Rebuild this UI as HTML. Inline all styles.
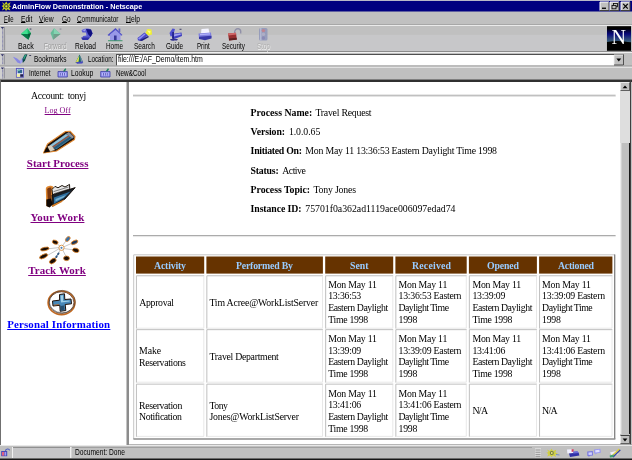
<!DOCTYPE html>
<html><head><meta charset="utf-8"><title>AdminFlow Demonstration - Netscape</title>
<style>
html,body{margin:0;padding:0;width:632px;height:460px;overflow:hidden;background:#c0c0c0}
*{box-sizing:border-box}
.abs,.abs>*{position:absolute}
.abs{left:0;top:0;width:632px;height:460px;overflow:hidden}
.x{white-space:nowrap}
.x u{text-underline-offset:0.3px;text-decoration-thickness:0.8px}
.cell{background:#fff;border:1px solid #e4e4e4;border-top-color:#b8b8b8;border-left-color:#b8b8b8}
.hd{background:#663300}
svg{overflow:visible}
</style></head><body>
<div class="abs" style="will-change:transform">
<!-- title bar -->
<div style="left:0;top:0;width:632px;height:11px;background:#000080"></div>
<!--TITLEICONS-->
<!-- menu -->
<div style="left:0;top:11px;width:632px;height:13px;background:#c0c0c0"></div>
<!-- toolbar -->
<div style="left:0;top:24px;width:632px;height:30px;background:#c0c0c0"></div>
<!--TOOLICONS-->
<!-- location -->
<div style="left:0;top:54px;width:632px;height:13px;background:#c0c0c0"></div>
<div style="left:116px;top:54px;width:508px;height:12px;background:#fff;border-top:1px solid #505050;border-left:1px solid #505050;border-bottom:1px solid #dcdcdc"></div>
<!-- personal -->
<div style="left:0;top:66px;width:632px;height:14px;background:#c0c0c0"></div>
<!--LOCICONS-->
<svg style="left:0;top:0" width="632" height="82" viewBox="0 0 632 82">
<!-- separators -->
<rect x="0" y="11" width="632" height="0.5" fill="#000080"/>
<rect x="0" y="24" width="632" height="0.8" fill="#969696"/><rect x="0" y="24.9" width="632" height="0.9" fill="#f4f4f4"/>
<rect x="0" y="51" width="632" height="1" fill="#8c8c8c"/><rect x="0" y="52" width="632" height="1" fill="#f0f0f0"/>
<rect x="0" y="65.6" width="632" height="0.9" fill="#8c8c8c"/><rect x="0" y="66.7" width="632" height="1" fill="#f0f0f0"/>
<rect x="6" y="34.8" width="600" height="16.2" fill="#c7c7c9"/>
<!-- top window edge -->
<rect x="0" y="0" width="632" height="1" fill="#b8b8c8"/>
<!-- title icon -->
<g>
<path d="M2 2 L4.5 4 L6.3 1.6 L7.6 4 L10.6 2.2 L9.3 5.2 L11 6.6 L9 7.6 L10.4 10.6 L7.4 9.2 L6 11 L4.8 8.8 L2 10.4 L3.4 7.4 L1.6 6 L3.6 5 Z" fill="#c8d020"/>
<circle cx="6.3" cy="6.3" r="2.3" fill="#506028"/>
<circle cx="6.3" cy="6.3" r="1.1" fill="#d8e040"/>
</g>
<!-- title buttons -->
<g>
<rect x="600" y="2" width="9" height="8.5" fill="#c0c0c0"/><path d="M600 10.5V2H609" stroke="#fff" stroke-width="1" fill="none"/><path d="M609 2V10.5H600" stroke="#404040" stroke-width="1" fill="none"/>
<rect x="602" y="7.6" width="4" height="1.3" fill="#000"/>
<rect x="610" y="2" width="9" height="8.5" fill="#c0c0c0"/><path d="M610 10.5V2H619" stroke="#fff" stroke-width="1" fill="none"/><path d="M619 2V10.5H610" stroke="#404040" stroke-width="1" fill="none"/>
<rect x="613.4" y="3.4" width="4" height="3.4" fill="none" stroke="#000" stroke-width="0.8"/><rect x="612" y="5.4" width="4" height="3.4" fill="#c0c0c0" stroke="#000" stroke-width="0.8"/>
<rect x="621" y="2" width="9" height="8.5" fill="#c0c0c0"/><path d="M621 10.5V2H630" stroke="#fff" stroke-width="1" fill="none"/><path d="M630 2V10.5H621" stroke="#404040" stroke-width="1" fill="none"/>
<path d="M623.2 3.8 L627.8 8.6 M627.8 3.8 L623.2 8.6" stroke="#000" stroke-width="1.2"/>
</g>
<!-- grips -->
<g>
<rect x="0.6" y="27" width="0.8" height="23" fill="#ececec"/><rect x="4.2" y="27" width="0.8" height="23" fill="#8c8c94"/>
<path d="M2.7 29.5 V50" stroke="#6868a8" stroke-width="0.9" stroke-dasharray="0.7 0.6" fill="none"/>
<path d="M0.7 27 L4.1 27 L2.4 29 Z" fill="#303068"/>
<rect x="0.6" y="54.2" width="0.8" height="10.299999999999997" fill="#ececec"/><rect x="4.2" y="54.2" width="0.8" height="10.299999999999997" fill="#8c8c94"/>
<path d="M2.7 56.7 V64.5" stroke="#6868a8" stroke-width="0.9" stroke-dasharray="0.7 0.6" fill="none"/>
<path d="M0.7 54.2 L4.1 54.2 L2.4 56.2 Z" fill="#303068"/>
<rect x="0.6" y="67.5" width="0.8" height="10.900000000000006" fill="#ececec"/><rect x="4.2" y="67.5" width="0.8" height="10.900000000000006" fill="#8c8c94"/>
<path d="M2.7 70.0 V78.4" stroke="#6868a8" stroke-width="0.9" stroke-dasharray="0.7 0.6" fill="none"/>
<path d="M0.7 67.5 L4.1 67.5 L2.4 69.5 Z" fill="#303068"/>
</g>
<!-- Back -->
<g>
<path d="M21 34 L27.5 28.3 L31 33 L28.5 39.8 Z" fill="#18b868"/>
<path d="M21 34 L27.5 28.3 L27.8 34 Z" fill="#40e090"/>
<path d="M21 34 L28.5 39.8 L27.8 34 Z" fill="#087848"/>
<path d="M27.8 34 L31 33 L28.5 39.8 Z" fill="#0a5a3a"/>
<rect x="29.6" y="28.6" width="1.8" height="0.9" fill="#303050"/>
</g>
<!-- Forward (disabled) -->
<g opacity="0.62">
<path d="M60.5 34 L54 28.3 L50.5 33 L53 39.8 Z" fill="#30b880"/>
<path d="M60.5 34 L54 28.3 L53.7 34 Z" fill="#60e0a8"/>
<path d="M60.5 34 L53 39.8 L53.7 34 Z" fill="#408868"/>
<rect x="59.6" y="28.6" width="1.8" height="0.9" fill="#505070"/>
</g>
<!-- Reload -->
<g>
<path d="M81.5 30.5 C83 28.5 88 27.5 91 29.5 L92.5 33 C92 36 90 38.5 86 39.5 L82 38.5 L83 36 L86.5 35.5 L86 32.5 L82.5 32.5 Z" fill="#5858d0"/>
<path d="M86 29 L91 29.5 L92.5 33.5 L90.5 37 L88 34 Z" fill="#101080"/>
<path d="M81 37.5 L90 37.5 L88 40 L82.5 40 Z" fill="#3030a8"/>
<path d="M82 30 L86 29 L85 31.5 Z" fill="#a0a0f0"/>
</g>
<!-- Home -->
<g>
<path d="M107.5 35 L115.5 28 L122.5 35 L121 35.8 L115.5 30.4 L109 36 Z" fill="#5050c8"/>
<path d="M110 34.5 L115.5 30 L120.5 34.5 L120.5 40.5 L110 40.5 Z" fill="#9898e8"/>
<rect x="114" y="35.5" width="2.6" height="5" fill="#383898"/>
<rect x="118.5" y="28.5" width="1.8" height="3.5" fill="#6060c0"/>
<rect x="108" y="40.3" width="14.5" height="0.9" fill="#309060"/>
</g>
<!-- Search -->
<g>
<path d="M145.5 33 L147.5 29 L151.5 29.5 L152 34.5 L148 35.5 Z" fill="#f0f030"/>
<path d="M147 30.5 L150.5 31 L150 34 Z" fill="#ffff90"/>
<path d="M137.5 38 L144.5 32.5 L148 35.5 L141 40.5 L138 40.5 Z" fill="#4848c8"/>
<path d="M138 38.5 L144.5 33.5 L145.5 34.5 L139.5 39.5 Z" fill="#9090f0"/>
<path d="M139 40.5 L148 36 L149 37 L142 41 Z" fill="#202080"/>
</g>
<!-- Guide -->
<g>
<path d="M169.5 33 L172.5 28.5 L175 29 L173 36 L170.5 36.5 Z" fill="#5050d0"/>
<path d="M172 34 L181.5 32.5 L182 36 L174.5 39 L172 38 Z" fill="#4040c0"/>
<path d="M173 34.5 L180.5 33.3 L180.8 34.8 L174 36.5 Z" fill="#a0a0f0"/>
<rect x="172.3" y="32" width="1.6" height="8.5" fill="#202088"/>
<rect x="179.5" y="28.8" width="2" height="0.9" fill="#303060"/>
<path d="M170 39 L178 39 L177 40.6 L171 40.6 Z" fill="#303090"/>
</g>
<!-- Print -->
<g>
<path d="M201.5 29 L208.5 28.5 L209.5 33 L201 33.5 Z" fill="#f4f4ff"/>
<path d="M198.5 33.5 L211 32.5 L211.5 37.5 L199 38.5 Z" fill="#8080e0"/>
<path d="M199 36.8 L211.5 35.8 L211.5 38.5 L205 40.3 L199 39 Z" fill="#3838a8"/>
<path d="M200 34 L210 33.2 L210 34.4 L200 35.2 Z" fill="#b0b0f8"/>
</g>
<!-- Security -->
<g>
<path d="M234.5 34 C234 30 236.5 28.3 238.5 28.8 C240.5 29.3 241 31.5 240.6 33.5" fill="none" stroke="#9090a8" stroke-width="1.4"/>
<path d="M228 33.5 L236 32.8 L236.8 39.5 L229 40.5 Z" fill="#983030"/>
<path d="M228 33.5 L236 32.8 L236.2 34.6 L228.3 35.4 Z" fill="#d06868"/>
<path d="M229 38.5 L236.7 37.8 L236.8 39.8 L229 40.6 Z" fill="#602020"/>
</g>
<!-- Stop (disabled) -->
<g opacity="0.75">
<rect x="259" y="28" width="8.5" height="12.5" rx="1.5" fill="#8890b8"/>
<rect x="260.2" y="28" width="1.2" height="12.5" fill="#b8c0e0"/>
<circle cx="263.4" cy="30.6" r="1.7" fill="#c07080"/>
<circle cx="263.4" cy="34.3" r="1.7" fill="#a8a8c8"/>
<circle cx="263.4" cy="38" r="1.7" fill="#7878b0"/>
</g>
<!-- N logo -->
<g>
<defs><linearGradient id="ng" x1="0" y1="0" x2="0" y2="1"><stop offset="0" stop-color="#000028"/><stop offset="0.35" stop-color="#08087a"/><stop offset="0.7" stop-color="#28407c"/><stop offset="1" stop-color="#406878"/></linearGradient></defs>
<rect x="607" y="26.2" width="24" height="24.6" fill="#000"/>
<rect x="607" y="29.5" width="24" height="13" fill="url(#ng)"/>
<path d="M607 42 Q619 39.6 631 42.4 L631 44 L607 44 Z" fill="#000"/>
<text x="618.7" y="43.6" font-family="'Liberation Serif',serif" font-size="20" fill="#fff" text-anchor="middle">N</text>
</g>
<!-- Bookmarks icon -->
<g>
<path d="M13 56.8 L17 58.6 L20 61 L22.5 57.2 L23.4 61 L20.6 63.8 L17.5 62.6 Z" fill="#a0a0f0"/>
<path d="M13 56.8 L17 58.6 L20 61 L20.4 63.6 L17.5 62.6 Z" fill="#8888e0"/>
<path d="M24.6 54.4 L27.4 54.2 L25 60.5 L22.8 63 L22.4 59 Z" fill="#104848"/>
<path d="M24.8 55 L26.4 55 L24 59.5 L23.2 59 Z" fill="#30a888"/>
<rect x="29.2" y="55" width="1.9" height="0.9" fill="#303050"/>
</g>
<!-- Location icon -->
<g>
<path d="M79.6 54.4 L83.2 62.4 L75.4 62.8 Z" fill="#106868"/>
<path d="M79.4 55.5 L78.4 62.6 L75.4 62.8 Z" fill="#e8e848"/>
<path d="M80.2 56 L83.2 62.4 L81 62.5 Z" fill="#8090a8"/>
<path d="M75.8 62 L83 61.6 L82.4 63.6 L77 63.8 Z" fill="#4848c0"/>
</g>
<!-- Internet icon -->
<g>
<rect x="16.4" y="68.4" width="7" height="8.8" fill="#e8e8ff" stroke="#5050b8" stroke-width="0.9"/>
<rect x="17.6" y="69.6" width="4.6" height="3.6" fill="#306890"/>
<rect x="17.6" y="69.6" width="2.2" height="1.4" fill="#70c0b0"/>
<rect x="16.8" y="74.2" width="3.4" height="2.6" fill="#f0f0a0"/>
<rect x="20.2" y="74.2" width="2.8" height="2.6" fill="#202050"/>
</g>
<!-- Lookup icon -->
<g>
<path d="M58 71.5 L67.3 71.5 L67.3 77 L58 77 Z" fill="#9898f0" stroke="#4040a8" stroke-width="0.8"/>
<path d="M63 71.3 L65.2 68.2 L66.3 69 L65 71.5 Z" fill="#208060"/>
<rect x="59.5" y="73" width="6.3" height="2.6" fill="#c0c0ff"/>
<rect x="60.3" y="73" width="0.8" height="2.6" fill="#5050b0"/><rect x="62.2" y="73" width="0.8" height="2.6" fill="#5050b0"/><rect x="64.1" y="73" width="0.8" height="2.6" fill="#5050b0"/>
</g>
<!-- New&Cool icon -->
<g transform="translate(42.7,0)">
<path d="M58 71.5 L67.3 71.5 L67.3 77 L58 77 Z" fill="#9898f0" stroke="#4040a8" stroke-width="0.8"/>
<path d="M63 71.3 L65.2 68.2 L66.3 69 L65 71.5 Z" fill="#208060"/>
<rect x="59.5" y="73" width="6.3" height="2.6" fill="#c0c0ff"/>
<rect x="60.3" y="73" width="0.8" height="2.6" fill="#5050b0"/><rect x="62.2" y="73" width="0.8" height="2.6" fill="#5050b0"/><rect x="64.1" y="73" width="0.8" height="2.6" fill="#5050b0"/>
</g>
<!-- location dropdown button -->
<g>
<rect x="614" y="55" width="9.5" height="10" fill="#c0c0c0"/>
<path d="M614 65 V55 H623.5" stroke="#f0f0f0" stroke-width="0.9" fill="none"/>
<path d="M623.5 55 V65 H614" stroke="#404040" stroke-width="0.9" fill="none"/>
<path d="M616.4 58.6 L621.2 58.6 L618.8 61.6 Z" fill="#000"/>
</g>
</svg>

<!-- content -->
<div style="left:0;top:79px;width:632px;height:1px;background:#808080"></div>
<div style="left:0;top:80px;width:632px;height:2px;background:#303030"></div>
<div style="left:0;top:82px;width:632px;height:363px;background:#fff"></div>
<div style="left:0;top:80px;width:1px;height:365px;background:#707070"></div>
<div style="left:126px;top:82px;width:1px;height:363px;background:#c4c4c4"></div>
<div style="left:127px;top:82px;width:2px;height:363px;background:#8c8c8c"></div>
<!-- scrollbar -->
<div style="left:620px;top:82px;width:12px;height:363px;background:#c0c0c0"></div>
<div style="left:620px;top:91px;width:10px;height:52px;background:#dedede"></div>
<div style="left:620px;top:143px;width:1px;height:291px;background:#ececec"></div>
<div style="left:621px;top:143px;width:1px;height:291px;background:#d2d2d2"></div>
<div style="left:630px;top:80px;width:1px;height:365px;background:#404040"></div>
<div style="left:629px;top:143px;width:1px;height:291px;background:#181818"></div>
<div style="left:620px;top:82px;width:10px;height:9px;background:#c0c0c0;border-right:1px solid #606060;border-bottom:1px solid #606060;border-left:1px solid #e8e8e8;border-top:1px solid #e8e8e8"></div>
<div style="left:620px;top:435px;width:10px;height:9px;background:#c0c0c0;border-right:1px solid #606060;border-bottom:1px solid #606060;border-left:1px solid #e8e8e8;border-top:1px solid #404040"></div>
<svg style="left:620px;top:82px" width="10" height="9"><path d="M2.6 6.2 L7.4 6.2 L5 3.4 Z" fill="#000"/></svg>
<svg style="left:620px;top:435px" width="10" height="9"><path d="M2.6 3.6 L7.4 3.6 L5 6.4 Z" fill="#000"/></svg>

<svg style="left:0;top:82px" width="127" height="363" viewBox="0 82 127 363">
<!-- pencil: 43..75.5 x 131..153.5 -->
<g>
<path d="M43.5 153 L47.5 144 L65.5 131.5 L70 131.2 L75 136.5 L74.5 139.5 L56.5 151 Z" fill="#201008" stroke="#e08830" stroke-width="1.1" stroke-linejoin="round"/>
<path d="M49.5 145.5 L66 133.8 L72.5 138 L56 149.5 Z" fill="#4088a8"/>
<path d="M50.5 145 L66 134.2 L68 135.4 L52 146.6 Z" fill="#90c0d8"/>
<path d="M53.5 147.8 L70 136.6 L71.5 137.8 L55.5 149 Z" fill="#285878"/>
<path d="M52 146.8 L68.5 135.4 L69.6 136.3 L53.2 147.6 Z" fill="#a05038"/>
<path d="M66 133.8 L69 132 L74 137 L72.5 138.5 Z" fill="#909098"/>
<path d="M47.5 146.5 L51 145 L55 150 L50 151.5 Z" fill="#d8d0c0"/>
<path d="M43.8 152.8 L46.3 147.4 L50 151.6 Z" fill="#100804"/>
</g>
<!-- folder: 45..75 x 184..207.5 -->
<g>
<path d="M45.8 189 C45.8 186.6 48 186 51 185.8 L53.2 186.6 L52.4 203 L49.5 207.2 L46.3 206 Z" fill="#e08830"/>
<path d="M47.2 189.5 C47.2 188 49 187.6 51.4 187.6 L50.8 202 L48 203.5 Z" fill="#7a3810"/>
<path d="M46.4 199.5 L51 198.6 L52.8 204.6 L49.6 207.4 L46.4 206 Z" fill="#100804"/>
<path d="M52 189.4 L55 186.4 L58 187.8 L62 185.5 L65 187 L69.5 184.4 L70 193 L53 198 Z" fill="#e8e8e8" stroke="#201810" stroke-width="1"/>
<path d="M53.5 191.6 L68.5 187 M53.5 193.8 L68.5 189.2 M53.5 196 L68.5 191.4" stroke="#606060" stroke-width="0.8"/>
<path d="M52 195 L75.2 187.6 L65 199 L52.4 206.2 Z" fill="#182028" stroke="#100804" stroke-width="0.9" stroke-linejoin="round"/>
<path d="M54 197.4 L70.5 191.6 L64 198 L54 203.8 Z" fill="#3070a0"/>
<path d="M55.5 199 L66 195 L63.5 197.6 L55.5 201.4 Z" fill="#78b0d0"/>
<path d="M51.8 205.2 L64 199.4 L62 202 L52.6 207 Z" fill="#d88028"/>
</g>
<!-- track work: 38.4..79 x 237..263.5 -->
<g>
<g stroke="#909090" stroke-width="0.5">
<path d="M60.5 247 L56 242.5 M61.5 247 L67 239.5 M63 247.2 L72.5 243 M63.5 248.5 L74.5 250 M62.5 249.5 L66 256.5 M60.5 249.5 L54.5 259.5 M59.5 248.5 L46.5 256 M59.5 247.5 L46.5 249"/>
</g>
<circle cx="61.5" cy="247.8" r="2.6" fill="#fff" stroke="#d89040" stroke-width="0.9"/>
<circle cx="61.5" cy="247.8" r="1.1" fill="#5080b0"/>
<g>
<ellipse cx="55.2" cy="242.2" rx="3" ry="1.9" fill="#180c04" stroke="#e08830" stroke-width="0.8" transform="rotate(20 55.2 242.2)"/>
<ellipse cx="67.8" cy="239" rx="2.9" ry="1.8" fill="#3870a8" stroke="#e08830" stroke-width="0.8" transform="rotate(-50 67.8 239)"/>
<ellipse cx="74.5" cy="242.3" rx="3.6" ry="1.8" fill="#203858" stroke="#e08830" stroke-width="0.8" transform="rotate(-25 74.5 242.3)"/>
<ellipse cx="75.8" cy="250.3" rx="3.3" ry="2.1" fill="#180c04" stroke="#e08830" stroke-width="0.8" transform="rotate(15 75.8 250.3)"/>
<ellipse cx="66.5" cy="258.3" rx="2.9" ry="2.3" fill="#180c04" stroke="#e08830" stroke-width="0.8"/>
<ellipse cx="52.8" cy="261" rx="3.7" ry="2.2" fill="#180c04" stroke="#e08830" stroke-width="0.8" transform="rotate(-35 52.8 261)"/>
<ellipse cx="43.6" cy="256.3" rx="4.4" ry="1.9" fill="#180c04" stroke="#e08830" stroke-width="0.8" transform="rotate(-25 43.6 256.3)"/>
<ellipse cx="44.8" cy="249" rx="4.4" ry="1.7" fill="#180c04" stroke="#e08830" stroke-width="0.8" transform="rotate(-12 44.8 249)"/>
<ellipse cx="58.3" cy="253.8" rx="1.5" ry="1" fill="#305880" transform="rotate(-55 58.3 253.8)"/>
<ellipse cx="56.5" cy="256.6" rx="1.5" ry="1" fill="#305880" transform="rotate(-55 56.5 256.6)"/>
</g>
</g>
<!-- personal info: circle 47..76 x 290..315.4 -->
<g>
<ellipse cx="61.5" cy="302.8" rx="13.4" ry="11.8" fill="#fff" stroke="#c06820" stroke-width="1.6"/>
<ellipse cx="61.5" cy="302.6" rx="12.4" ry="10.8" fill="none" stroke="#402010" stroke-width="0.7"/>
<ellipse cx="62.3" cy="301.6" rx="13" ry="11.2" fill="none" stroke="#303030" stroke-width="0.5"/>
<path d="M59.5 294.5 L64.5 293.8 L64.8 299.5 L71 299 L71.5 303.8 L65.2 304.5 L65.8 310.5 L60.2 311.3 L59.8 305.3 L53 306 L52.5 301 L59.6 300.2 Z" fill="#4888b8" stroke="#201008" stroke-width="1" stroke-linejoin="round"/>
<path d="M60.5 295.5 L63 295.2 L63.2 301 L69.5 300.4 L69.6 301.6 L61 302.5 Z" fill="#a0d0e8"/>
<path d="M60.5 306 L64 305.6 L64.5 309.8 L61 310.3 Z" fill="#285070"/>
<path d="M53.5 304.8 L59 304.2 L59 305 L54 305.6 Z" fill="#c06820"/>
</g>
</svg>


<!-- right frame -->

<!-- table -->
<svg style="left:0;top:90px" width="632" height="355" viewBox="0 90 632 355">
<rect x="133" y="235.1" width="482.6" height="1" fill="#a2a2a2"/><rect x="133" y="236.1" width="482.6" height="1" fill="#e6e6e6"/>
<rect x="133" y="94.3" width="482.6" height="0.9" fill="#dedede"/><rect x="133" y="95.2" width="482.6" height="1.1" fill="#b2b2b2"/><rect x="133" y="96.3" width="482.6" height="0.6" fill="#e0e0e0"/>
<path d="M133.7 439 V254.8 H615" fill="none" stroke="#c6c6c6" stroke-width="1"/>
<path d="M614.7 254.6 V439" fill="none" stroke="#808080" stroke-width="1.3"/>
<path d="M133.4 438.9 H615.35" fill="none" stroke="#8c8c8c" stroke-width="1.5"/>
<rect x="129" y="444.2" width="503" height="0.8" fill="#a4a4a4"/>
<rect x="136.0" y="256.5" width="68.2" height="17.1" fill="#663300"/>
<rect x="206.4" y="256.5" width="116.5" height="17.1" fill="#663300"/>
<rect x="325.2" y="256.5" width="68.0" height="17.1" fill="#663300"/>
<rect x="395.4" y="256.5" width="71.3" height="17.1" fill="#663300"/>
<rect x="468.9" y="256.5" width="68.0" height="17.1" fill="#663300"/>
<rect x="539.1" y="256.5" width="73.3" height="17.1" fill="#663300"/>
<path d="M136.45 328.6 V275.75 H204.2" fill="none" stroke="#b8b8b8" stroke-width="0.9"/><path d="M203.80 276.20 V328.20 H136.90" fill="none" stroke="#e2e2e2" stroke-width="0.8"/>
<path d="M206.85 328.6 V275.75 H322.9" fill="none" stroke="#b8b8b8" stroke-width="0.9"/><path d="M322.50 276.20 V328.20 H207.30" fill="none" stroke="#e2e2e2" stroke-width="0.8"/>
<path d="M325.65 328.6 V275.75 H393.2" fill="none" stroke="#b8b8b8" stroke-width="0.9"/><path d="M392.80 276.20 V328.20 H326.10" fill="none" stroke="#e2e2e2" stroke-width="0.8"/>
<path d="M395.85 328.6 V275.75 H466.7" fill="none" stroke="#b8b8b8" stroke-width="0.9"/><path d="M466.30 276.20 V328.20 H396.30" fill="none" stroke="#e2e2e2" stroke-width="0.8"/>
<path d="M469.35 328.6 V275.75 H536.9" fill="none" stroke="#b8b8b8" stroke-width="0.9"/><path d="M536.50 276.20 V328.20 H469.80" fill="none" stroke="#e2e2e2" stroke-width="0.8"/>
<path d="M539.55 328.6 V275.75 H612.4" fill="none" stroke="#b8b8b8" stroke-width="0.9"/><path d="M612.00 276.20 V328.20 H540.00" fill="none" stroke="#e2e2e2" stroke-width="0.8"/>
<path d="M136.45 382.6 V329.65 H204.2" fill="none" stroke="#b8b8b8" stroke-width="0.9"/><path d="M203.80 330.10 V382.20 H136.90" fill="none" stroke="#e2e2e2" stroke-width="0.8"/>
<path d="M206.85 382.6 V329.65 H322.9" fill="none" stroke="#b8b8b8" stroke-width="0.9"/><path d="M322.50 330.10 V382.20 H207.30" fill="none" stroke="#e2e2e2" stroke-width="0.8"/>
<path d="M325.65 382.6 V329.65 H393.2" fill="none" stroke="#b8b8b8" stroke-width="0.9"/><path d="M392.80 330.10 V382.20 H326.10" fill="none" stroke="#e2e2e2" stroke-width="0.8"/>
<path d="M395.85 382.6 V329.65 H466.7" fill="none" stroke="#b8b8b8" stroke-width="0.9"/><path d="M466.30 330.10 V382.20 H396.30" fill="none" stroke="#e2e2e2" stroke-width="0.8"/>
<path d="M469.35 382.6 V329.65 H536.9" fill="none" stroke="#b8b8b8" stroke-width="0.9"/><path d="M536.50 330.10 V382.20 H469.80" fill="none" stroke="#e2e2e2" stroke-width="0.8"/>
<path d="M539.55 382.6 V329.65 H612.4" fill="none" stroke="#b8b8b8" stroke-width="0.9"/><path d="M612.00 330.10 V382.20 H540.00" fill="none" stroke="#e2e2e2" stroke-width="0.8"/>
<path d="M136.45 436.8 V384.15 H204.2" fill="none" stroke="#b8b8b8" stroke-width="0.9"/><path d="M203.80 384.60 V436.40 H136.90" fill="none" stroke="#e2e2e2" stroke-width="0.8"/>
<path d="M206.85 436.8 V384.15 H322.9" fill="none" stroke="#b8b8b8" stroke-width="0.9"/><path d="M322.50 384.60 V436.40 H207.30" fill="none" stroke="#e2e2e2" stroke-width="0.8"/>
<path d="M325.65 436.8 V384.15 H393.2" fill="none" stroke="#b8b8b8" stroke-width="0.9"/><path d="M392.80 384.60 V436.40 H326.10" fill="none" stroke="#e2e2e2" stroke-width="0.8"/>
<path d="M395.85 436.8 V384.15 H466.7" fill="none" stroke="#b8b8b8" stroke-width="0.9"/><path d="M466.30 384.60 V436.40 H396.30" fill="none" stroke="#e2e2e2" stroke-width="0.8"/>
<path d="M469.35 436.8 V384.15 H536.9" fill="none" stroke="#b8b8b8" stroke-width="0.9"/><path d="M536.50 384.60 V436.40 H469.80" fill="none" stroke="#e2e2e2" stroke-width="0.8"/>
<path d="M539.55 436.8 V384.15 H612.4" fill="none" stroke="#b8b8b8" stroke-width="0.9"/><path d="M612.00 384.60 V436.40 H540.00" fill="none" stroke="#e2e2e2" stroke-width="0.8"/>
</svg>

<!-- status bar -->
<div style="left:0;top:445px;width:632px;height:15px;background:#c0c0c0"></div>
<div style="left:0;top:445px;width:632px;height:1px;background:#e8e8e8"></div>
<svg style="left:0;top:445px" width="632" height="15" viewBox="0 445 632 15">
<rect x="0" y="458.5" width="632" height="1.5" fill="#181818"/>
<!-- left security icon -->
<g>
<rect x="1.2" y="451" width="6" height="5.2" fill="#4848b8"/>
<rect x="2" y="452" width="2.2" height="3.6" fill="#e06080"/>
<rect x="4.6" y="452" width="1.6" height="3.6" fill="#a0a0f0"/>
<path d="M5.5 451 C5.5 448.6 9.2 448.2 9.6 450.4" fill="none" stroke="#5060c0" stroke-width="1.1"/>
</g>
<!-- panels -->
<rect x="12" y="447" width="1" height="11" fill="#f0f0f0"/>
<rect x="13" y="447" width="57" height="11" fill="#c6c6c8"/>
<rect x="13" y="447" width="57" height="1" fill="#909090"/>
<rect x="70" y="447" width="1.4" height="11" fill="#f0f0f0"/>
<rect x="72" y="447" width="460" height="1" fill="#a0a0a0"/>
<!-- component bar -->
<g>
<rect x="535" y="448" width="6" height="9.5" fill="#d8d8d8"/>
<path d="M535.5 450 H540.5 M535.5 452.3 H540.5 M535.5 454.6 H540.5 M535.5 456.6 H540.5" stroke="#808080" stroke-width="0.7"/>
<!-- navigator wheel -->
<path d="M547 449.6 L549.8 451 L551.6 448.8 L553 451 L556.4 449.8 L555.2 452.4 L558 453.4 L555.2 454.6 L556 457 L553 455.6 L551.6 457.2 L550 455.4 L547.2 456.6 L548.4 454 L546.4 452.8 L548.6 452 Z" fill="#d0d040"/>
<circle cx="551.8" cy="453" r="2" fill="#707848"/>
<circle cx="551.8" cy="453" r="0.9" fill="#f0f080"/>
<path d="M556 454.5 L559.5 455" stroke="#6080c0" stroke-width="0.8"/>
<!-- mailbox -->
<path d="M567 449.6 L573 449.2 L573.4 453 L567.4 453.4 Z" fill="#f0f0ff"/>
<rect x="571.6" y="449.2" width="2" height="2.6" fill="#d04060"/>
<path d="M569 453.4 L578.6 452.4 L579.4 455.4 L570 457 Z" fill="#3030a8"/>
<path d="M573 451.6 L577.5 451 L578.6 453 L573.4 453.6 Z" fill="#6868d8"/>
<!-- discussions -->
<path d="M587.2 451.6 L592.8 451 L593 455.6 L590 455.8 L588.6 457.2 L588.6 456 L587.4 456 Z" fill="#7878e0"/>
<path d="M588.4 452.6 L591.8 452.2 L592 454.8 L588.6 455 Z" fill="#d0d0ff"/>
<path d="M594 449.4 L600.4 448.8 L600.8 452.8 L597 453.2 L595.4 454.8 L595.6 453.4 L594.2 453.4 Z" fill="#9898f0"/>
<path d="M595.2 450.2 L599.4 449.8 L599.6 452 L595.4 452.4 Z" fill="#e0e0ff"/>
<!-- composer -->
<path d="M610 452.4 L616 451 L618.6 454 L612.4 456.4 Z" fill="#f0f0f8"/>
<path d="M612 456.6 L619.6 449.2 L620.8 450.2 L613.6 457.4 Z" fill="#3848a8"/>
<path d="M611.4 455.4 L618.8 448.6 L619.8 449.4 L612.4 456.4 Z" fill="#e0d040"/>
<path d="M609.6 455.6 L614 454.6 L613.4 457 L610 457.4 Z" fill="#40a070"/>
</g>
</svg>

<div class="abs" style="will-change:transform">
<div class="x" style="left:12.2px;top:2.8px;font-family:'Liberation Sans',sans-serif;font-size:7.4px;line-height:8.9px;transform:scaleX(0.976);transform-origin:0 50%;color:#fff;font-weight:bold;">AdminFlow Demonstration - Netscape</div>
<div class="x" style="left:3.5px;top:14.6px;font-family:'Liberation Sans',sans-serif;font-size:8.2px;line-height:9.8px;transform:scaleX(0.734);transform-origin:0 50%;color:#000;"><u>F</u>ile</div>
<div class="x" style="left:20.8px;top:14.6px;font-family:'Liberation Sans',sans-serif;font-size:8.2px;line-height:9.8px;transform:scaleX(0.807);transform-origin:0 50%;color:#000;"><u>E</u>dit</div>
<div class="x" style="left:39.2px;top:14.6px;font-family:'Liberation Sans',sans-serif;font-size:8.2px;line-height:9.8px;transform:scaleX(0.823);transform-origin:0 50%;color:#000;"><u>V</u>iew</div>
<div class="x" style="left:61.5px;top:14.6px;font-family:'Liberation Sans',sans-serif;font-size:8.2px;line-height:9.8px;transform:scaleX(0.786);transform-origin:0 50%;color:#000;"><u>G</u>o</div>
<div class="x" style="left:77.2px;top:14.6px;font-family:'Liberation Sans',sans-serif;font-size:8.2px;line-height:9.8px;transform:scaleX(0.776);transform-origin:0 50%;color:#000;"><u>C</u>ommunicator</div>
<div class="x" style="left:125.8px;top:14.6px;font-family:'Liberation Sans',sans-serif;font-size:8.2px;line-height:9.8px;transform:scaleX(0.824);transform-origin:0 50%;color:#000;"><u>H</u>elp</div>
<div class="x" style="left:17.7px;top:41.9px;font-family:'Liberation Sans',sans-serif;font-size:8.2px;line-height:9.8px;transform:scaleX(0.862);transform-origin:0 50%;color:#000;">Back</div>
<div class="x" style="left:44.3px;top:41.9px;font-family:'Liberation Sans',sans-serif;font-size:8.2px;line-height:9.8px;transform:scaleX(0.756);transform-origin:0 50%;color:#9c9c9c;text-shadow:0.6px 0.6px 0 #f4f4f4;">Forward</div>
<div class="x" style="left:74.7px;top:41.9px;font-family:'Liberation Sans',sans-serif;font-size:8.2px;line-height:9.8px;transform:scaleX(0.809);transform-origin:0 50%;color:#000;">Reload</div>
<div class="x" style="left:106.3px;top:41.9px;font-family:'Liberation Sans',sans-serif;font-size:8.2px;line-height:9.8px;transform:scaleX(0.778);transform-origin:0 50%;color:#000;">Home</div>
<div class="x" style="left:134.2px;top:41.9px;font-family:'Liberation Sans',sans-serif;font-size:8.2px;line-height:9.8px;transform:scaleX(0.801);transform-origin:0 50%;color:#000;">Search</div>
<div class="x" style="left:165.6px;top:41.9px;font-family:'Liberation Sans',sans-serif;font-size:8.2px;line-height:9.8px;transform:scaleX(0.787);transform-origin:0 50%;color:#000;">Guide</div>
<div class="x" style="left:197.2px;top:41.9px;font-family:'Liberation Sans',sans-serif;font-size:8.2px;line-height:9.8px;transform:scaleX(0.754);transform-origin:0 50%;color:#000;">Print</div>
<div class="x" style="left:222.0px;top:41.9px;font-family:'Liberation Sans',sans-serif;font-size:8.2px;line-height:9.8px;transform:scaleX(0.771);transform-origin:0 50%;color:#000;">Security</div>
<div class="x" style="left:257.0px;top:41.9px;font-family:'Liberation Sans',sans-serif;font-size:8.2px;line-height:9.8px;transform:scaleX(0.772);transform-origin:0 50%;color:#b0b0b0;text-shadow:0.6px 0.6px 0 #f4f4f4;">Stop</div>
<div class="x" style="left:34.2px;top:55.1px;font-family:'Liberation Sans',sans-serif;font-size:8.2px;line-height:9.8px;transform:scaleX(0.791);transform-origin:0 50%;color:#000;">Bookmarks</div>
<div class="x" style="left:87.8px;top:55.1px;font-family:'Liberation Sans',sans-serif;font-size:8.2px;line-height:9.8px;transform:scaleX(0.764);transform-origin:0 50%;color:#000;">Location:</div>
<div class="x" style="left:117.7px;top:55.1px;font-family:'Liberation Sans',sans-serif;font-size:8.2px;line-height:9.8px;transform:scaleX(0.847);transform-origin:0 50%;color:#000;">file:///E:/AF_Demo/item.htm</div>
<div class="x" style="left:28.6px;top:69.4px;font-family:'Liberation Sans',sans-serif;font-size:8.2px;line-height:9.8px;transform:scaleX(0.774);transform-origin:0 50%;color:#000;">Internet</div>
<div class="x" style="left:70.9px;top:69.4px;font-family:'Liberation Sans',sans-serif;font-size:8.2px;line-height:9.8px;transform:scaleX(0.830);transform-origin:0 50%;color:#000;">Lookup</div>
<div class="x" style="left:116.0px;top:69.4px;font-family:'Liberation Sans',sans-serif;font-size:8.2px;line-height:9.8px;transform:scaleX(0.775);transform-origin:0 50%;color:#000;">New&amp;Cool</div>
<div class="x" style="left:74.7px;top:448.1px;font-family:'Liberation Sans',sans-serif;font-size:8.2px;line-height:9.8px;transform:scaleX(0.812);transform-origin:0 50%;color:#000;">Document: Done</div>
<div class="x" style="left:31.1px;top:89.8px;font-family:'Liberation Serif',serif;font-size:9.8px;line-height:11.8px;letter-spacing:-0.401px;color:#000;word-spacing:1.8px;">Account: tonyj</div>
<div class="x" style="left:44.6px;top:106.4px;font-family:'Liberation Serif',serif;font-size:8px;line-height:9.6px;letter-spacing:0.023px;color:#800080;text-decoration:underline;text-decoration-thickness:0.6px;">Log Off</div>
<div class="x" style="left:26.8px;top:157.1px;font-family:'Liberation Serif',serif;font-size:10.9px;line-height:13.1px;letter-spacing:0.033px;color:#800080;font-weight:bold;text-decoration:underline;">Start Process</div>
<div class="x" style="left:30.5px;top:211.0px;font-family:'Liberation Serif',serif;font-size:10.9px;line-height:13.1px;letter-spacing:0.218px;color:#800080;font-weight:bold;text-decoration:underline;">Your Work</div>
<div class="x" style="left:28.2px;top:264.3px;font-family:'Liberation Serif',serif;font-size:10.9px;line-height:13.1px;letter-spacing:0.091px;color:#800080;font-weight:bold;text-decoration:underline;">Track Work</div>
<div class="x" style="left:7.2px;top:318.2px;font-family:'Liberation Serif',serif;font-size:10.9px;line-height:13.1px;letter-spacing:0.150px;color:#0000ff;font-weight:bold;text-decoration:underline;">Personal Information</div>
<div class="x" style="left:250.6px;top:106.6px;font-family:'Liberation Serif',serif;font-size:9.8px;line-height:11.8px;letter-spacing:0.002px;color:#000;font-weight:bold;">Process Name:</div>
<div class="x" style="left:315.4px;top:106.6px;font-family:'Liberation Serif',serif;font-size:9.8px;line-height:11.8px;letter-spacing:-0.233px;color:#000;">Travel Request</div>
<div class="x" style="left:250.6px;top:125.9px;font-family:'Liberation Serif',serif;font-size:9.8px;line-height:11.8px;letter-spacing:-0.076px;color:#000;font-weight:bold;">Version:</div>
<div class="x" style="left:288.9px;top:125.9px;font-family:'Liberation Serif',serif;font-size:9.8px;line-height:11.8px;letter-spacing:-0.063px;color:#000;">1.0.0.65</div>
<div class="x" style="left:250.6px;top:145.2px;font-family:'Liberation Serif',serif;font-size:9.8px;line-height:11.8px;letter-spacing:-0.277px;color:#000;font-weight:bold;">Initiated On:</div>
<div class="x" style="left:305.3px;top:145.2px;font-family:'Liberation Serif',serif;font-size:9.8px;line-height:11.8px;letter-spacing:-0.213px;color:#000;">Mon May 11 13:36:53 Eastern Daylight Time 1998</div>
<div class="x" style="left:250.6px;top:164.5px;font-family:'Liberation Serif',serif;font-size:9.8px;line-height:11.8px;letter-spacing:-0.218px;color:#000;font-weight:bold;">Status:</div>
<div class="x" style="left:282.3px;top:164.5px;font-family:'Liberation Serif',serif;font-size:9.8px;line-height:11.8px;letter-spacing:-0.525px;color:#000;">Active</div>
<div class="x" style="left:250.6px;top:183.8px;font-family:'Liberation Serif',serif;font-size:9.8px;line-height:11.8px;letter-spacing:-0.036px;color:#000;font-weight:bold;">Process Topic:</div>
<div class="x" style="left:313.4px;top:183.8px;font-family:'Liberation Serif',serif;font-size:9.8px;line-height:11.8px;letter-spacing:-0.180px;color:#000;">Tony Jones</div>
<div class="x" style="left:250.6px;top:203.1px;font-family:'Liberation Serif',serif;font-size:9.8px;line-height:11.8px;letter-spacing:-0.099px;color:#000;font-weight:bold;">Instance ID:</div>
<div class="x" style="left:305.3px;top:203.1px;font-family:'Liberation Serif',serif;font-size:9.8px;line-height:11.8px;letter-spacing:-0.011px;color:#000;">75701f0a362ad1119ace006097edad74</div>
<div class="x" style="left:154.0px;top:260.4px;font-family:'Liberation Serif',serif;font-size:9.8px;line-height:11.8px;letter-spacing:-0.172px;color:#99ccff;font-weight:bold;">Activity</div>
<div class="x" style="left:236.0px;top:260.4px;font-family:'Liberation Serif',serif;font-size:9.8px;line-height:11.8px;letter-spacing:-0.194px;color:#99ccff;font-weight:bold;">Performed By</div>
<div class="x" style="left:350.0px;top:260.4px;font-family:'Liberation Serif',serif;font-size:9.8px;line-height:11.8px;letter-spacing:-0.005px;color:#99ccff;font-weight:bold;">Sent</div>
<div class="x" style="left:412.0px;top:260.4px;font-family:'Liberation Serif',serif;font-size:9.8px;line-height:11.8px;letter-spacing:0.208px;color:#99ccff;font-weight:bold;">Received</div>
<div class="x" style="left:487.0px;top:260.4px;font-family:'Liberation Serif',serif;font-size:9.8px;line-height:11.8px;letter-spacing:-0.134px;color:#99ccff;font-weight:bold;">Opened</div>
<div class="x" style="left:558.0px;top:260.4px;font-family:'Liberation Serif',serif;font-size:9.8px;line-height:11.8px;letter-spacing:-0.223px;color:#99ccff;font-weight:bold;">Actioned</div>
<div class="x" style="left:328.2px;top:278.7px;font-family:'Liberation Serif',serif;font-size:9.8px;line-height:11.8px;letter-spacing:-0.224px;color:#000;">Mon May 11</div>
<div class="x" style="left:328.2px;top:290.4px;font-family:'Liberation Serif',serif;font-size:9.8px;line-height:11.8px;letter-spacing:-0.263px;color:#000;">13:36:53</div>
<div class="x" style="left:328.2px;top:302.1px;font-family:'Liberation Serif',serif;font-size:9.8px;line-height:11.8px;letter-spacing:-0.408px;color:#000;">Eastern Daylight</div>
<div class="x" style="left:328.2px;top:313.8px;font-family:'Liberation Serif',serif;font-size:9.8px;line-height:11.8px;letter-spacing:-0.297px;color:#000;">Time 1998</div>
<div class="x" style="left:398.5px;top:278.7px;font-family:'Liberation Serif',serif;font-size:9.8px;line-height:11.8px;letter-spacing:-0.224px;color:#000;">Mon May 11</div>
<div class="x" style="left:398.5px;top:290.4px;font-family:'Liberation Serif',serif;font-size:9.8px;line-height:11.8px;letter-spacing:-0.245px;color:#000;">13:36:53 Eastern</div>
<div class="x" style="left:398.5px;top:302.1px;font-family:'Liberation Serif',serif;font-size:9.8px;line-height:11.8px;letter-spacing:-0.533px;color:#000;">Daylight Time</div>
<div class="x" style="left:398.5px;top:313.8px;font-family:'Liberation Serif',serif;font-size:9.8px;line-height:11.8px;letter-spacing:-0.265px;color:#000;">1998</div>
<div class="x" style="left:472.4px;top:278.7px;font-family:'Liberation Serif',serif;font-size:9.8px;line-height:11.8px;letter-spacing:-0.224px;color:#000;">Mon May 11</div>
<div class="x" style="left:472.4px;top:290.4px;font-family:'Liberation Serif',serif;font-size:9.8px;line-height:11.8px;letter-spacing:-0.263px;color:#000;">13:39:09</div>
<div class="x" style="left:472.4px;top:302.1px;font-family:'Liberation Serif',serif;font-size:9.8px;line-height:11.8px;letter-spacing:-0.408px;color:#000;">Eastern Daylight</div>
<div class="x" style="left:472.4px;top:313.8px;font-family:'Liberation Serif',serif;font-size:9.8px;line-height:11.8px;letter-spacing:-0.297px;color:#000;">Time 1998</div>
<div class="x" style="left:542.1px;top:278.7px;font-family:'Liberation Serif',serif;font-size:9.8px;line-height:11.8px;letter-spacing:-0.224px;color:#000;">Mon May 11</div>
<div class="x" style="left:542.1px;top:290.4px;font-family:'Liberation Serif',serif;font-size:9.8px;line-height:11.8px;letter-spacing:-0.245px;color:#000;">13:39:09 Eastern</div>
<div class="x" style="left:542.1px;top:302.1px;font-family:'Liberation Serif',serif;font-size:9.8px;line-height:11.8px;letter-spacing:-0.533px;color:#000;">Daylight Time</div>
<div class="x" style="left:542.1px;top:313.8px;font-family:'Liberation Serif',serif;font-size:9.8px;line-height:11.8px;letter-spacing:-0.265px;color:#000;">1998</div>
<div class="x" style="left:328.2px;top:332.9px;font-family:'Liberation Serif',serif;font-size:9.8px;line-height:11.8px;letter-spacing:-0.224px;color:#000;">Mon May 11</div>
<div class="x" style="left:328.2px;top:344.6px;font-family:'Liberation Serif',serif;font-size:9.8px;line-height:11.8px;letter-spacing:-0.263px;color:#000;">13:39:09</div>
<div class="x" style="left:328.2px;top:356.3px;font-family:'Liberation Serif',serif;font-size:9.8px;line-height:11.8px;letter-spacing:-0.408px;color:#000;">Eastern Daylight</div>
<div class="x" style="left:328.2px;top:368.0px;font-family:'Liberation Serif',serif;font-size:9.8px;line-height:11.8px;letter-spacing:-0.297px;color:#000;">Time 1998</div>
<div class="x" style="left:398.5px;top:332.9px;font-family:'Liberation Serif',serif;font-size:9.8px;line-height:11.8px;letter-spacing:-0.224px;color:#000;">Mon May 11</div>
<div class="x" style="left:398.5px;top:344.6px;font-family:'Liberation Serif',serif;font-size:9.8px;line-height:11.8px;letter-spacing:-0.245px;color:#000;">13:39:09 Eastern</div>
<div class="x" style="left:398.5px;top:356.3px;font-family:'Liberation Serif',serif;font-size:9.8px;line-height:11.8px;letter-spacing:-0.533px;color:#000;">Daylight Time</div>
<div class="x" style="left:398.5px;top:368.0px;font-family:'Liberation Serif',serif;font-size:9.8px;line-height:11.8px;letter-spacing:-0.265px;color:#000;">1998</div>
<div class="x" style="left:472.4px;top:332.9px;font-family:'Liberation Serif',serif;font-size:9.8px;line-height:11.8px;letter-spacing:-0.224px;color:#000;">Mon May 11</div>
<div class="x" style="left:472.4px;top:344.6px;font-family:'Liberation Serif',serif;font-size:9.8px;line-height:11.8px;letter-spacing:-0.263px;color:#000;">13:41:06</div>
<div class="x" style="left:472.4px;top:356.3px;font-family:'Liberation Serif',serif;font-size:9.8px;line-height:11.8px;letter-spacing:-0.408px;color:#000;">Eastern Daylight</div>
<div class="x" style="left:472.4px;top:368.0px;font-family:'Liberation Serif',serif;font-size:9.8px;line-height:11.8px;letter-spacing:-0.297px;color:#000;">Time 1998</div>
<div class="x" style="left:542.1px;top:332.9px;font-family:'Liberation Serif',serif;font-size:9.8px;line-height:11.8px;letter-spacing:-0.224px;color:#000;">Mon May 11</div>
<div class="x" style="left:542.1px;top:344.6px;font-family:'Liberation Serif',serif;font-size:9.8px;line-height:11.8px;letter-spacing:-0.245px;color:#000;">13:41:06 Eastern</div>
<div class="x" style="left:542.1px;top:356.3px;font-family:'Liberation Serif',serif;font-size:9.8px;line-height:11.8px;letter-spacing:-0.533px;color:#000;">Daylight Time</div>
<div class="x" style="left:542.1px;top:368.0px;font-family:'Liberation Serif',serif;font-size:9.8px;line-height:11.8px;letter-spacing:-0.265px;color:#000;">1998</div>
<div class="x" style="left:328.2px;top:387.5px;font-family:'Liberation Serif',serif;font-size:9.8px;line-height:11.8px;letter-spacing:-0.224px;color:#000;">Mon May 11</div>
<div class="x" style="left:328.2px;top:399.2px;font-family:'Liberation Serif',serif;font-size:9.8px;line-height:11.8px;letter-spacing:-0.263px;color:#000;">13:41:06</div>
<div class="x" style="left:328.2px;top:410.9px;font-family:'Liberation Serif',serif;font-size:9.8px;line-height:11.8px;letter-spacing:-0.408px;color:#000;">Eastern Daylight</div>
<div class="x" style="left:328.2px;top:422.6px;font-family:'Liberation Serif',serif;font-size:9.8px;line-height:11.8px;letter-spacing:-0.297px;color:#000;">Time 1998</div>
<div class="x" style="left:398.5px;top:387.5px;font-family:'Liberation Serif',serif;font-size:9.8px;line-height:11.8px;letter-spacing:-0.224px;color:#000;">Mon May 11</div>
<div class="x" style="left:398.5px;top:399.2px;font-family:'Liberation Serif',serif;font-size:9.8px;line-height:11.8px;letter-spacing:-0.245px;color:#000;">13:41:06 Eastern</div>
<div class="x" style="left:398.5px;top:410.9px;font-family:'Liberation Serif',serif;font-size:9.8px;line-height:11.8px;letter-spacing:-0.533px;color:#000;">Daylight Time</div>
<div class="x" style="left:398.5px;top:422.6px;font-family:'Liberation Serif',serif;font-size:9.8px;line-height:11.8px;letter-spacing:-0.265px;color:#000;">1998</div>
<div class="x" style="left:472.4px;top:405.3px;font-family:'Liberation Serif',serif;font-size:9.8px;line-height:11.8px;letter-spacing:-0.637px;color:#000;">N/A</div>
<div class="x" style="left:542.1px;top:405.3px;font-family:'Liberation Serif',serif;font-size:9.8px;line-height:11.8px;letter-spacing:-0.637px;color:#000;">N/A</div>
<div class="x" style="left:139.3px;top:296.5px;font-family:'Liberation Serif',serif;font-size:9.8px;line-height:11.8px;letter-spacing:-0.331px;color:#000;">Approval</div>
<div class="x" style="left:209.4px;top:296.5px;font-family:'Liberation Serif',serif;font-size:9.8px;line-height:11.8px;letter-spacing:-0.167px;color:#000;">Tim Acree@WorkListServer</div>
<div class="x" style="left:139.0px;top:344.8px;font-family:'Liberation Serif',serif;font-size:9.8px;line-height:11.8px;letter-spacing:-0.038px;color:#000;">Make</div>
<div class="x" style="left:139.0px;top:356.5px;font-family:'Liberation Serif',serif;font-size:9.8px;line-height:11.8px;letter-spacing:-0.337px;color:#000;">Reservations</div>
<div class="x" style="left:209.5px;top:350.7px;font-family:'Liberation Serif',serif;font-size:9.8px;line-height:11.8px;letter-spacing:-0.289px;color:#000;">Travel Department</div>
<div class="x" style="left:139.0px;top:399.5px;font-family:'Liberation Serif',serif;font-size:9.8px;line-height:11.8px;letter-spacing:-0.350px;color:#000;">Reservation</div>
<div class="x" style="left:139.0px;top:411.2px;font-family:'Liberation Serif',serif;font-size:9.8px;line-height:11.8px;letter-spacing:-0.413px;color:#000;">Notification</div>
<div class="x" style="left:209.5px;top:399.5px;font-family:'Liberation Serif',serif;font-size:9.8px;line-height:11.8px;letter-spacing:-0.500px;color:#000;">Tony</div>
<div class="x" style="left:209.5px;top:411.2px;font-family:'Liberation Serif',serif;font-size:9.8px;line-height:11.8px;letter-spacing:-0.191px;color:#000;">Jones@WorkListServer</div>
</div>
</div>
</body></html>
